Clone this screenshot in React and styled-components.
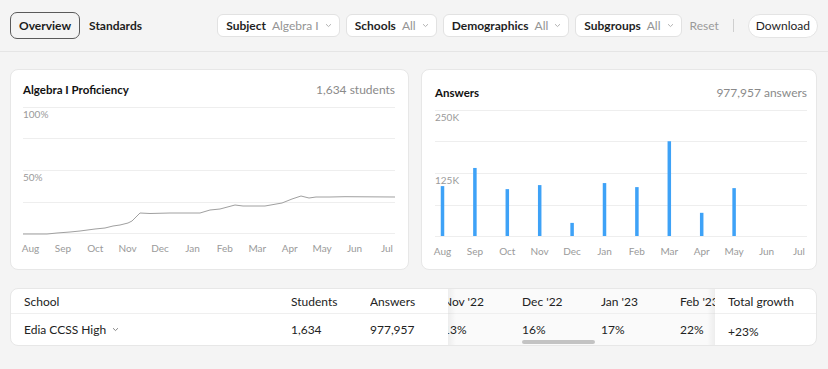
import React, { useLayoutEffect, useRef, useState } from "react";
import styled, { createGlobalStyle } from "styled-components";

const GlobalStyle = createGlobalStyle`
  html, body {
    margin: 0;
    padding: 0;
    background: #f4f4f4;
    font-family: "Lato", "Noto Sans", sans-serif;
    color: #1c1c1c;
  }
  * { box-sizing: border-box; }
`;

const MONTHS = ["Aug", "Sep", "Oct", "Nov", "Dec", "Jan", "Feb", "Mar", "Apr", "May", "Jun", "Jul"];

const PROFICIENCY = [
  [0, 127], [24, 127], [34, 126], [47, 125], [57, 124], [72, 122], [82, 121],
  [90, 119], [97, 118], [105, 116], [109, 114], [117, 106], [127, 106.5],
  [147, 106], [177, 106], [187, 103], [197, 102], [212, 98], [220, 99],
  [242, 99], [259, 96], [269, 92], [278, 89], [286, 91], [293, 90],
  [307, 90], [322, 89.7], [372, 90],
];

// answers per month, in thousands
const ANSWERS = [99, 135, 93, 101, 26, 105, 97, 188, 46, 95, null, null];

const MONTH_COLS = [
  ["Aug '22", "0%"], ["Sep '22", "2%"], ["Oct '22", "5%"], ["Nov '22", "13%"],
  ["Dec '22", "16%"], ["Jan '23", "17%"], ["Feb '23", "22%"], ["Mar '23", "22%"],
  ["Apr '23", "25%"], ["May '23", "29%"], ["Jun '23", "29%"], ["Jul '23", "29%"],
];

const COL_W = 79;
const VIEW_W = 267;
const START_SCROLL = 242;

const Page = styled.div`
  width: 828px;
  min-height: 369px;
`;

const TopBar = styled.header`
  height: 52px;
  display: flex;
  align-items: center;
  padding: 0 10px;
  border-bottom: 1px solid #e5e5e5;
`;

const Tab = styled.button`
  height: 27px;
  padding: 0 8px;
  border: 1.5px solid ${(p) => (p.$active ? "#5a5a5a" : "transparent")};
  border-radius: 7px;
  background: transparent;
  font-family: inherit;
  font-size: 12px;
  font-weight: 700;
  color: #1c1c1c;
  cursor: pointer;
`;

const Filters = styled.div`
  margin-left: auto;
  display: flex;
  align-items: center;
  gap: 6px;
`;

const Pill = styled.button`
  height: 23px;
  display: flex;
  align-items: center;
  padding: 0 7px 0 8px;
  background: #fff;
  border: 1px solid #e2e2e2;
  border-radius: 6px;
  font-family: inherit;
  font-size: 12px;
  cursor: pointer;
`;

const PillLabel = styled.span`
  font-weight: 700;
  color: #1f1f1f;
  margin-right: 6px;
`;

const PillValue = styled.span`
  color: #949494;
  margin-right: 6px;
`;

const Reset = styled.span`
  margin-left: 2px;
  font-size: 12px;
  color: #9a9a9a;
`;

const Divider = styled.span`
  width: 1px;
  height: 13px;
  background: #cfcfcf;
  margin: 0 8px;
`;

const Download = styled.button`
  height: 24px;
  padding: 0 7px;
  background: #fff;
  border: 1px solid #e4e4e4;
  border-radius: 12px;
  font-family: inherit;
  font-size: 12px;
  color: #1f1f1f;
  cursor: pointer;
`;

const Main = styled.main`
  padding: 17px 11px 0 10px;
`;

const Cards = styled.div`
  display: grid;
  grid-template-columns: 399px 396px;
  gap: 12px;
`;

const Card = styled.section`
  height: 201px;
  background: #fff;
  border: 1px solid #e7e7e7;
  border-radius: 8px;
  padding: ${(p) => p.$top}px ${(p) => p.$right}px 0 ${(p) => p.$left}px;
`;

const CardHead = styled.div`
  height: 18px;
  display: flex;
  align-items: center;
  justify-content: space-between;
  margin-bottom: 9px;
`;

const CardTitle = styled.h2`
  margin: 0;
  font-size: 11.5px;
  font-weight: 700;
  color: #111;
`;

const CardMeta = styled.span`
  font-size: 12px;
  color: #8a8a8a;
`;

const Chart = styled.svg`
  display: block;
  overflow: visible;
  font-family: "Lato", "Noto Sans", sans-serif;
  font-size: 10px;
`;

const GRID = [0.5, 31.5, 63.5, 95.5, 126.5];
const labelX = (i) => 7.5 + i * 32.4;

function Axes({ top, mid }) {
  return (
    <>
      {GRID.map((y) => (
        <line key={y} x1="0" x2="372" y1={y} y2={y} stroke="#eeeeee" strokeWidth="1" />
      ))}
      <text x="0" y="11" fill="#9a9a9a">{top}</text>
      <text x="0" y="74" fill="#9a9a9a">{mid}</text>
      {MONTHS.map((m, i) => (
        <text key={m} x={labelX(i)} y="145" fill="#9a9a9a" textAnchor="middle">{m}</text>
      ))}
    </>
  );
}

function ProficiencyChart() {
  const d = PROFICIENCY.map(([x, y], i) => `${i ? "L" : "M"}${x} ${y}`).join(" ");
  return (
    <Chart width="372" height="150" viewBox="0 0 372 150">
      <Axes top="100%" mid="50%" />
      <path d={d} fill="none" stroke="#a0a0a0" strokeWidth="1" strokeLinejoin="round" />
    </Chart>
  );
}

function AnswersChart() {
  return (
    <Chart width="372" height="150" viewBox="0 0 372 150">
      <Axes top="250K" mid="125K" />
      {ANSWERS.map((v, i) => {
        if (v == null) return null;
        const h = (v / 250) * 126;
        return <rect key={i} x={labelX(i) - 1.75} y={126 - h} width="3.5" height={h} fill="#3ea2f7" />;
      })}
    </Chart>
  );
}

const Chevron = ({ size = 7, color = "#a8a8a8" }) => (
  <svg width={size} height={size} viewBox="0 0 8 8">
    <path d="M1.5 2.8 L4 5.2 L6.5 2.8" fill="none" stroke={color} strokeWidth="1" strokeLinecap="round" />
  </svg>
);

const TableCard = styled.section`
  margin-top: 18px;
  display: flex;
  background: #fff;
  border: 1px solid #e7e7e7;
  border-radius: 8px;
  overflow: hidden;
`;

const Block = styled.div`
  flex: none;
  display: grid;
  grid-template-columns: ${(p) => p.$cols};
  grid-template-rows: 25px 31px;
`;

const HeadCell = styled.div`
  display: flex;
  align-items: center;
  padding-left: ${(p) => p.$pad || 0}px;
  border-bottom: 1px solid #efefef;
  font-size: 12px;
  color: #222;
  white-space: nowrap;
  overflow: hidden;
`;

const BodyCell = styled.div`
  display: flex;
  align-items: center;
  gap: 6px;
  padding-left: ${(p) => p.$pad || 0}px;
  padding-top: ${(p) => p.$drop || 0}px;
  font-size: 12px;
  color: #222;
  white-space: nowrap;
`;

const ScrollWrap = styled.div`
  position: relative;
  width: ${VIEW_W}px;
  flex: none;
  background: #fafafa;

  &::before,
  &::after {
    content: "";
    position: absolute;
    top: 0;
    bottom: 0;
    width: 8px;
    pointer-events: none;
  }
  &::before {
    left: 0;
    background: linear-gradient(to right, rgba(0, 0, 0, 0.05), rgba(0, 0, 0, 0));
  }
  &::after {
    right: 0;
    background: linear-gradient(to left, rgba(0, 0, 0, 0.05), rgba(0, 0, 0, 0));
  }
`;

const Scroller = styled.div`
  overflow-x: auto;
  scrollbar-width: none;
  &::-webkit-scrollbar { display: none; }
`;

const Thumb = styled.div`
  position: absolute;
  bottom: 1px;
  height: 4px;
  border-radius: 2px;
  background: #c3c3c3;
`;

function MonthScroller() {
  const ref = useRef(null);
  const [scroll, setScroll] = useState(START_SCROLL);
  const contentW = MONTH_COLS.length * COL_W;
  const thumbW = (VIEW_W * VIEW_W) / contentW;
  const thumbLeft = (scroll / (contentW - VIEW_W)) * (VIEW_W - thumbW) + 6;

  useLayoutEffect(() => {
    if (ref.current) ref.current.scrollLeft = START_SCROLL;
  }, []);

  return (
    <ScrollWrap>
      <Scroller ref={ref} onScroll={(e) => setScroll(e.currentTarget.scrollLeft)}>
        <Block $cols={`repeat(${MONTH_COLS.length}, ${COL_W}px)`}>
          {MONTH_COLS.map(([m]) => (
            <HeadCell key={m}>{m}</HeadCell>
          ))}
          {MONTH_COLS.map(([m, v]) => (
            <BodyCell key={m}>{v}</BodyCell>
          ))}
        </Block>
      </Scroller>
      <Thumb style={{ left: thumbLeft, width: thumbW - 2 }} />
    </ScrollWrap>
  );
}

export default function App() {
  return (
    <Page>
      <GlobalStyle />
      <TopBar>
        <Tab $active>Overview</Tab>
        <Tab>Standards</Tab>
        <Filters>
          <Pill><PillLabel>Subject</PillLabel><PillValue>Algebra I</PillValue><Chevron /></Pill>
          <Pill><PillLabel>Schools</PillLabel><PillValue>All</PillValue><Chevron /></Pill>
          <Pill><PillLabel>Demographics</PillLabel><PillValue>All</PillValue><Chevron /></Pill>
          <Pill><PillLabel>Subgroups</PillLabel><PillValue>All</PillValue><Chevron /></Pill>
          <Reset>Reset</Reset>
          <Divider />
          <Download>Download</Download>
        </Filters>
      </TopBar>
      <Main>
        <Cards>
          <Card $top={10} $left={12} $right={13}>
            <CardHead>
              <CardTitle>Algebra I Proficiency</CardTitle>
              <CardMeta>1,634 students</CardMeta>
            </CardHead>
            <ProficiencyChart />
          </Card>
          <Card $top={13} $left={13} $right={9}>
            <CardHead>
              <CardTitle>Answers</CardTitle>
              <CardMeta>977,957 answers</CardMeta>
            </CardHead>
            <AnswersChart />
          </Card>
        </Cards>
        <TableCard>
          <Block $cols="280px 79px 78px">
            <HeadCell $pad={13}>School</HeadCell>
            <HeadCell>Students</HeadCell>
            <HeadCell>Answers</HeadCell>
            <BodyCell $pad={13}>Edia CCSS High <Chevron size={7} color="#777" /></BodyCell>
            <BodyCell>1,634</BodyCell>
            <BodyCell>977,957</BodyCell>
          </Block>
          <MonthScroller />
          <Block $cols="101px">
            <HeadCell $pad={13}>Total growth</HeadCell>
            <BodyCell $pad={13} $drop={4}>+23%</BodyCell>
          </Block>
        </TableCard>
      </Main>
    </Page>
  );
}
